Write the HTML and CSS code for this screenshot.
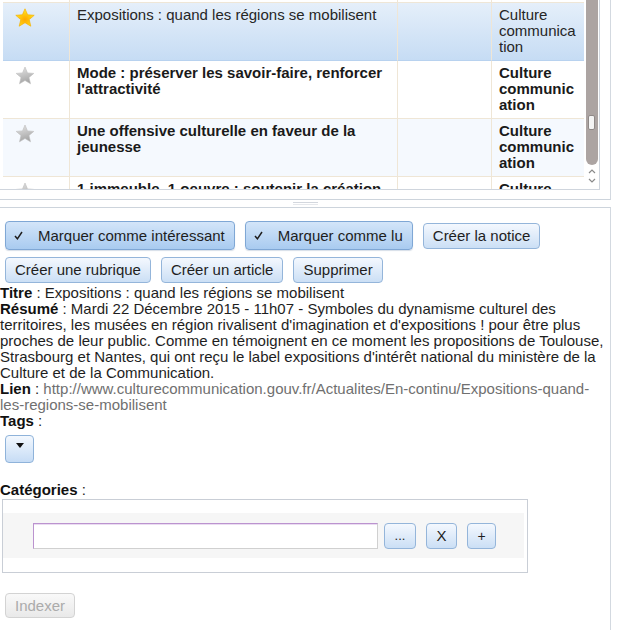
FILE: index.html
```html
<!DOCTYPE html>
<html lang="fr">
<head>
<meta charset="utf-8">
<title>Notices</title>
<link rel="stylesheet" href="styles.css">
</head>
<body>
<div class="top-panel">
  <div class="grid-box">
    <div class="grid-scroll">
      <table class="grid">
        <colgroup>
          <col class="c-star"><col class="c-title"><col class="c-empty"><col class="c-cat">
        </colgroup>
        <tr class="row-prev"><td></td><td></td><td></td><td></td></tr>
        <tr class="selected">
          <td class="star-cell">
            <svg class="star" width="20" height="19" viewBox="0 0 20 19"><defs><radialGradient id="gy" cx="50%" cy="62%" r="62%"><stop offset="0" stop-color="#ffa800"/><stop offset="0.55" stop-color="#ffcc10"/><stop offset="1" stop-color="#fff040"/></radialGradient></defs><polygon points="10,0.8 12.6,6.8 19.2,7.3 14.2,11.6 15.8,18.2 10,14.7 4.2,18.2 5.8,11.6 0.8,7.3 7.4,6.8" fill="url(#gy)" stroke="#f5b000" stroke-width="0.7" stroke-linejoin="round"/></svg>
          </td>
          <td>Expositions : quand les régions se mobilisent</td>
          <td></td>
          <td class="cat">Culture communication</td>
        </tr>
        <tr class="unread">
          <td class="star-cell">
            <svg class="star" width="20" height="19" viewBox="0 0 20 19"><defs><linearGradient id="gg1" x1="0" y1="0" x2="0.3" y2="1"><stop offset="0" stop-color="#e8e8e8"/><stop offset="1" stop-color="#a6a6a6"/></linearGradient></defs><polygon points="10,1 12.5,6.9 18.8,7.4 14,11.5 15.5,17.8 10,14.5 4.5,17.8 6,11.5 1.2,7.4 7.5,6.9" fill="url(#gg1)" stroke="#bdbdbd" stroke-width="0.6" stroke-linejoin="round"/></svg>
          </td>
          <td>Mode : préserver les savoir-faire, renforcer l'attractivité</td>
          <td></td>
          <td class="cat">Culture communication</td>
        </tr>
        <tr class="unread alt">
          <td class="star-cell">
            <svg class="star" width="20" height="19" viewBox="0 0 20 19"><defs><linearGradient id="gg2" x1="0" y1="0" x2="0.3" y2="1"><stop offset="0" stop-color="#e8e8e8"/><stop offset="1" stop-color="#a6a6a6"/></linearGradient></defs><polygon points="10,1 12.5,6.9 18.8,7.4 14,11.5 15.5,17.8 10,14.5 4.5,17.8 6,11.5 1.2,7.4 7.5,6.9" fill="url(#gg2)" stroke="#bdbdbd" stroke-width="0.6" stroke-linejoin="round"/></svg>
          </td>
          <td>Une offensive culturelle en faveur de la jeunesse</td>
          <td></td>
          <td class="cat">Culture communication</td>
        </tr>
        <tr class="unread">
          <td class="star-cell">
            <svg class="star" width="20" height="19" viewBox="0 0 20 19"><defs><linearGradient id="gg3" x1="0" y1="0" x2="0.3" y2="1"><stop offset="0" stop-color="#e8e8e8"/><stop offset="1" stop-color="#a6a6a6"/></linearGradient></defs><polygon points="10,1 12.5,6.9 18.8,7.4 14,11.5 15.5,17.8 10,14.5 4.5,17.8 6,11.5 1.2,7.4 7.5,6.9" fill="url(#gg3)" stroke="#bdbdbd" stroke-width="0.6" stroke-linejoin="round"/></svg>
          </td>
          <td>1 immeuble, 1 oeuvre : soutenir la création</td>
          <td></td>
          <td class="cat">Culture communication</td>
        </tr>
      </table>
    </div>
    <div class="vscroll">
      <div class="thumb"><span class="grip"></span></div>
      <svg class="arrow" width="8" height="5" viewBox="0 0 8 5"><path d="M1 4 L4 1 L7 4" fill="none" stroke="#8a8a8a" stroke-width="1.2"/></svg>
      <svg class="arrow" width="8" height="5" viewBox="0 0 8 5"><path d="M1 1 L4 4 L7 1" fill="none" stroke="#8a8a8a" stroke-width="1.2"/></svg>
    </div>
  </div>
</div>

<div class="splitter"><span class="handle"></span></div>

<div class="detail">
  <div class="btn-row">
    <button class="btn pressed"><svg class="check" width="9" height="9" viewBox="0 0 9 9"><path d="M1 5 L3.4 7.8 L8 1" fill="none" stroke="#1e1e1e" stroke-width="1.5"/></svg>Marquer comme intéressant</button>
    <button class="btn pressed"><svg class="check" width="9" height="9" viewBox="0 0 9 9"><path d="M1 5 L3.4 7.8 L8 1" fill="none" stroke="#1e1e1e" stroke-width="1.5"/></svg>Marquer comme lu</button>
    <button class="btn">Créer la notice</button>
  </div>
  <div class="btn-row">
    <button class="btn">Créer une rubrique</button>
    <button class="btn">Créer un article</button>
    <button class="btn">Supprimer</button>
  </div>

  <div class="info">
    <p><b>Titre</b> : Expositions : quand les régions se mobilisent</p>
    <p><b>Résumé</b> : Mardi 22 Décembre 2015 - 11h07 - Symboles du dynamisme culturel des territoires, les musées en région rivalisent d'imagination et d'expositions ! pour être plus proches de leur public. Comme en témoignent en ce moment les propositions de Toulouse, Strasbourg et Nantes, qui ont reçu le label expositions d'intérêt national du ministère de la Culture et de la Communication.</p>
    <p><b>Lien</b> : <span class="url">http://www.culturecommunication.gouv.fr/Actualites/En-continu/Expositions-quand-les-regions-se-mobilisent</span></p>
    <p><b>Tags</b> :</p>
  </div>
  <button class="tags-btn"><span class="tri"></span></button>

  <p class="cat-label"><b>Catégories</b> :</p>
  <div class="cat-box">
    <div class="cat-band">
      <input class="cat-input" type="text">
      <button class="btn small w-dots">...</button>
      <button class="btn small w-x">X</button>
      <button class="btn small w-plus">+</button>
    </div>
  </div>

  <button class="btn disabled indexer">Indexer</button>
</div>
</body>
</html>
```
FILE: styles.css
```css
* { box-sizing: border-box; }
html, body { margin: 0; padding: 0; background: #fff; }
body {
  font-family: "Liberation Sans", Arial, sans-serif;
  font-size: 15px;
  line-height: 16px;
  color: #1e1e1e;
  width: 619px;
  height: 630px;
  overflow: hidden;
}

/* ---------- top grid panel ---------- */
.top-panel {
  width: 611px;
  height: 200px;
  border-right: 1px solid #d3d9e0;
  border-bottom: 1px solid #cdd4dc;
  padding-bottom: 9px;
}
.grid-box {
  display: flex;
  width: 600px;
  height: 190px;
  border-right: 1px solid #cfd5dd;
  border-bottom: 1px solid #cfd5dd;
  padding-left: 3px;
}
.grid-scroll {
  width: 581px;
  height: 189px;
  overflow: hidden;
}
.grid {
  table-layout: fixed;
  width: 581px;
  border-collapse: separate;
  border-spacing: 0;
}
.c-star { width: 67px; }
.c-title { width: 328px; }
.c-empty { width: 94px; }
.c-cat { width: 92px; }
.grid td {
  vertical-align: top;
  padding: 4px 7px 5px 7px;
  border-bottom: 1px solid #efe6d6;
  border-right: 1px solid #efe6d6;
  color: #262626;
}
.grid td:last-child { border-right: none; }
.grid .row-prev td { padding: 0; height: 3px; }
.grid .cat { overflow-wrap: anywhere; }
.grid .star-cell { padding: 5px 0 0 12px; }
.star { display: block; }
.grid tr.selected td {
  background: linear-gradient(#e5effa, #c6dcf4);
  border-bottom-color: #b8d2ef;
}
.grid tr.alt td { background: #f5f9fe; }
.grid tr.unread td { font-weight: bold; color: #1a1a1a; }

.vscroll {
  width: 15px;
  display: flex;
  flex-direction: column;
  align-items: center;
}
.thumb {
  width: 12px;
  height: 165px;
  background: #aca4a2;
  border-radius: 0 0 6px 6px;
  display: flex;
  flex-direction: column;
  align-items: center;
  padding-top: 115px;
}
.grip {
  width: 7px;
  height: 15px;
  background: #f4f4f4;
  border: 1px solid #8f8987;
  border-radius: 2px;
}
.arrow { display: block; margin-top: 4px; }

/* ---------- splitter ---------- */
.splitter {
  width: 611px;
  height: 7px;
  display: flex;
  justify-content: center;
  align-items: center;
}
.handle {
  width: 25px;
  height: 3px;
  border-top: 1px solid #d3d7de;
  border-bottom: 1px solid #e6e8ec;
}

/* ---------- detail panel ---------- */
.detail {
  width: 611px;
  height: 423px;
  border-top: 1px solid #cdd4dc;
  border-right: 1px solid #d3d9e0;
  padding-top: 13px;
}
.btn-row {
  display: flex;
  align-items: center;
  gap: 10px;
  padding-left: 5px;
}
.btn-row + .btn-row { margin-top: 7px; }

.btn {
  font-family: "Liberation Sans", Arial, sans-serif;
  font-size: 15px;
  line-height: 16px;
  color: #1e1e1e;
  height: 26px;
  padding: 0 9px;
  border: 1px solid #94b5da;
  border-radius: 4px;
  background: linear-gradient(#f4f8fe, #cbdff5);
  display: inline-flex;
  align-items: center;
  justify-content: center;
  white-space: nowrap;
}
.btn.pressed {
  height: 29px;
  padding: 0 9px 0 8px;
  border-color: #7fa7d5;
  background: linear-gradient(#d3e5f9, #a9cbf0);
  box-shadow: 0 1px 1px rgba(90, 120, 160, 0.25);
}
.check { margin-right: 15px; }

.info { margin-top: 2px; width: 605px; }
.info p { margin: 0; }
.info b, .cat-label b { color: #111; }
.url { color: #707070; }

.tags-btn {
  display: flex;
  justify-content: center;
  align-items: flex-start;
  width: 29px;
  height: 28px;
  margin: 6px 0 0 5px;
  padding: 7px 0 0 0;
  border: 1px solid #8fb3da;
  border-radius: 4px;
  background: linear-gradient(#f3f8fe, #c6dcf5);
}
.tri {
  width: 0;
  height: 0;
  border-left: 4px solid transparent;
  border-right: 4px solid transparent;
  border-top: 5px solid #111;
}

.cat-label { margin: 19px 0 0 0; }
.cat-box {
  width: 526px;
  margin: 1px 0 0 2px;
  border: 1px solid #c9ced6;
  padding: 13px 3px 14px 0;
}
.cat-band {
  height: 45px;
  background: #f6f6f6;
  display: flex;
  align-items: center;
  padding-left: 30px;
  gap: 10px;
}
.cat-input {
  width: 345px;
  height: 26px;
  margin-right: -4px;
  border: 1px solid;
  border-color: #bb93cf #d0d0d0 #d0d0d0 #bb93cf;
  background: #fff;
  box-shadow: inset 0 1px 0 #eadcf1;
  outline: none;
  padding: 0 3px;
  font-family: "Liberation Sans", Arial, sans-serif;
  font-size: 15px;
}
.btn.small { padding: 0; height: 26px; }
.w-dots { width: 32px; font-size: 13px; }
.w-x { width: 31px; }
.w-plus { width: 29px; font-size: 14px; }

.btn.indexer {
  margin: 20px 0 0 5px;
  height: 25px;
  padding: 0 9px;
  color: #ababab;
  border-color: #d3d3d3;
  background: linear-gradient(#f9f9f9, #e9e9e9);
}
```
